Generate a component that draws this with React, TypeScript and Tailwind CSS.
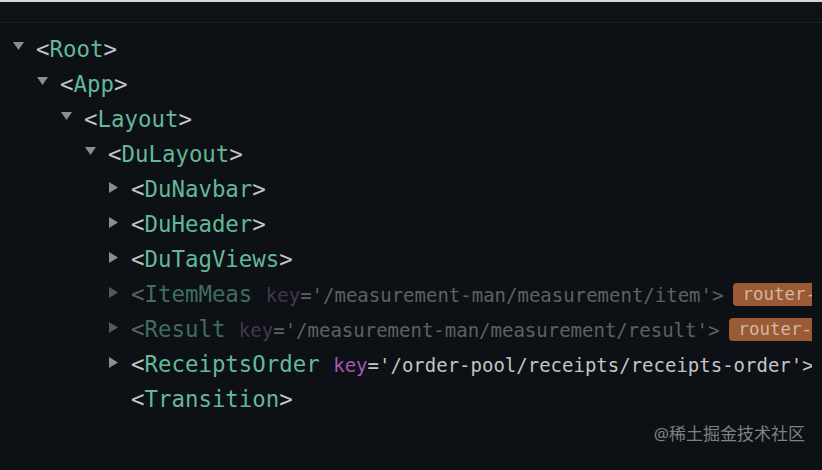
import React from "react";

type Row = {
  level: number;
  arrow: "down" | "right" | null;
  name: string;
  keyVal?: string;
  dim?: boolean;
  badge?: boolean;
};

const rows: Row[] = [
  { level: 0, arrow: "down", name: "Root" },
  { level: 1, arrow: "down", name: "App" },
  { level: 2, arrow: "down", name: "Layout" },
  { level: 3, arrow: "down", name: "DuLayout" },
  { level: 4, arrow: "right", name: "DuNavbar" },
  { level: 4, arrow: "right", name: "DuHeader" },
  { level: 4, arrow: "right", name: "DuTagViews" },
  { level: 4, arrow: "right", name: "ItemMeas", keyVal: "/measurement-man/measurement/item", dim: true, badge: true },
  { level: 4, arrow: "right", name: "Result", keyVal: "/measurement-man/measurement/result", dim: true, badge: true },
  { level: 4, arrow: "right", name: "ReceiptsOrder", keyVal: "/order-pool/receipts/receipts-order" },
  { level: 4, arrow: null, name: "Transition" },
];

const pad: Record<number, string> = {
  0: "pl-[12px]",
  1: "pl-[36px]",
  2: "pl-[60px]",
  3: "pl-[84px]",
  4: "pl-[107px]",
};

function Arrow({ dir, dim }: { dir: "down" | "right" | null; dim?: boolean }) {
  return (
    <span className="w-[24px] h-[35px] flex items-center justify-start shrink-0">
      {dir === "down" && (
        <svg width="11" height="9" viewBox="0 0 11 9" className="ml-[1px] -mt-[6px]">
          <path d="M0 0 L11 0 L5.5 8 Z" fill="#8a8d91" />
        </svg>
      )}
      {dir === "right" && (
        <svg width="9" height="11" viewBox="0 0 9 11" className="ml-[2px] -mt-[5px]">
          <path d="M0 0 L9 5.5 L0 11 Z" fill={dim ? "#55585c" : "#8a8d91"} />
        </svg>
      )}
    </span>
  );
}

export default function App() {
  return (
    <div className="w-[822px] h-[470px] bg-[#0d1014] overflow-hidden relative">
      <div className="h-[2px] bg-[#d8d8d8]" />
      <div className="h-[21px] bg-[#0e1115] border-b border-[#1e2228]" />
      <div
        className="w-[812px] overflow-hidden pt-[9px] text-[22.4px] leading-[35px] whitespace-nowrap"
        style={{ fontFamily: '"DejaVu Sans Mono", "Liberation Mono", monospace' }}
      >
        {rows.map((r, i) => (
          <div key={i} className={`flex items-center h-[35px] ${pad[r.level]}`}>
            <Arrow dir={r.arrow} dim={r.dim} />
            {r.dim ? (
              <span className="block h-[35px]">
                <span className="text-[#5d6064]">&lt;</span>
                <span className="text-[#3d6e5f]">{r.name}</span>
                <span>&nbsp;</span>
                <span className="text-[19px]">
                  <span className="text-[#44374f]">key</span>
                  <span className="text-[#5d6064]">='{r.keyVal}'&gt;</span>
                </span>
              </span>
            ) : (
              <span className="block h-[35px]">
                <span className="text-[#c2c4c6]">&lt;</span>
                <span className="text-[#62b899]">{r.name}</span>
                {r.keyVal ? (
                  <>
                    <span>&nbsp;</span>
                    <span className="text-[19px]">
                      <span className="text-[#a458b8]">key</span>
                      <span className="text-[#c2c4c6]">='{r.keyVal}'&gt;</span>
                    </span>
                  </>
                ) : (
                  <span className="text-[#c2c4c6]">&gt;</span>
                )}
              </span>
            )}
            {r.badge && (
              <span className="ml-[10px] -mt-[1px] h-[23px] leading-[23px] pl-[9px] pr-[4px] rounded-[4px] bg-[#9a5a34] text-[#d2b7a3] text-[17.5px]">
                router-view
              </span>
            )}
          </div>
        ))}
      </div>
      <div
        className="absolute right-[17px] top-[421px] text-[17px] text-[#7d8084]"
        style={{ fontFamily: '"Noto Sans", "Noto Sans CJK SC", sans-serif' }}
      >
        @稀土掘金技术社区
      </div>
    </div>
  );
}
